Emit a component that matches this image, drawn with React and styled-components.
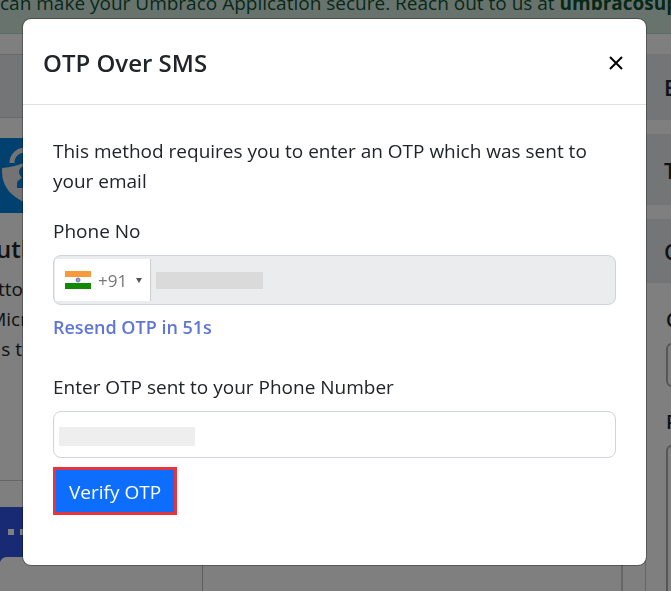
import React, { useState } from 'react';
import styled, { createGlobalStyle } from 'styled-components';

const GlobalStyle = createGlobalStyle`
  * {
    box-sizing: border-box;
  }

  body {
    margin: 0;
    background-color: #ffffff;
    color: #212529;
    font-family: 'Open Sans', 'Noto Sans', sans-serif;
    font-size: 19px;
    line-height: 30px;
  }
`;

const Page = styled.div`
  display: flex;
  flex-direction: column;
  height: 100vh;
  overflow: hidden;
`;

const Banner = styled.div`
  flex: none;
  height: 34px;
  background-color: #d1e7dd;
  border-bottom: 1px solid #badbcc;
  color: #0f5132;
  line-height: 6px;
  white-space: nowrap;
  overflow: hidden;
`;

const Columns = styled.div`
  flex: 1;
  display: flex;
  gap: 22px;
  padding-top: 20px;
`;

const Main = styled.main`
  flex: 1;
  display: flex;
  flex-direction: column;
  border-right: 2px solid #cccccc;
`;

const MainHeading = styled.div`
  height: 64px;
  background-color: #e7eaee;
  border: solid #cfd2d6;
  border-width: 1px 0;
`;

const Card = styled.section`
  height: 363px;
  padding-top: 20px;
  border-bottom: 1px solid #cccccc;
`;

const CardLogo = styled.svg`
  display: block;
  width: 76px;
  height: 75px;
`;

// right aligned, so a longer line runs out past the left edge
const CardLine = styled.p`
  display: flex;
  justify-content: flex-end;
  width: ${({ $width }) => $width};
  margin: 0;
  white-space: nowrap;
`;

const CardTitle = styled(CardLine)`
  margin: 21px 0 10px;
  font-size: 24px;
  font-weight: 600;
`;

const NextCard = styled.section`
  flex: 1;
  width: 203px;
  padding-top: 26px;
  border-right: 1px solid #bbbbbb;
`;

const Sidebar = styled.aside`
  flex: none;
  width: 26px;
  border-left: 1px solid #cccccc;
  overflow: hidden;
`;

const SidebarItem = styled.div`
  display: flex;
  align-items: center;
  height: ${({ $height }) => $height};
  margin-bottom: 14px;
  padding-left: 18px;
  background-color: #e7eaee;
  font-size: 22px;
  font-weight: 600;
`;

const SidebarForm = styled.div`
  padding: 8px 0 0 20px;
`;

const SidebarLabel = styled.label`
  display: block;
  margin-bottom: 8px;
  font-weight: 600;
`;

const SidebarInput = styled.input`
  display: block;
  width: 200px;
  height: 44px;
  margin-bottom: 20px;
  border: 2px solid #aaaaaa;
  border-radius: 6px;
`;

const SidebarTextarea = styled.textarea`
  display: block;
  width: 200px;
  height: 180px;
  border: 2px solid #aaaaaa;
  border-radius: 6px;
`;

const Backdrop = styled.div`
  position: fixed;
  inset: 0;
  display: flex;
  align-items: flex-start;
  padding: 18px 24px 24px 22px;
  background-color: rgba(0, 0, 0, 0.5);
`;

const Dialog = styled.div`
  flex: 1;
  background-color: #ffffff;
  background-clip: padding-box;
  border: 1px solid rgba(0, 0, 0, 0.3);
  border-radius: 9px;
`;

const DialogHeader = styled.header`
  display: flex;
  align-items: center;
  justify-content: space-between;
  height: 86px;
  padding: 3px 20px 0;
  border-bottom: 1px solid #dee2e6;
`;

const Title = styled.h1`
  margin: 0;
  font-size: 24px;
  font-weight: 600;
`;

const CloseButton = styled.button`
  display: flex;
  padding: 3px;
  border: none;
  background: none;
  cursor: pointer;
`;

const DialogBody = styled.form`
  padding: 31px 30px 50px;
`;

const Message = styled.p`
  margin: 0 0 20px;
`;

const Label = styled.label`
  display: block;
  margin-bottom: 9px;
`;

const Field = styled.div`
  display: flex;
  align-items: center;
  height: ${({ $disabled }) => ($disabled ? '50px' : '47px')};
  padding: ${({ $disabled }) => ($disabled ? '3px 1px' : '3px 5px 0')};
  border: 1px solid #ced4da;
  border-radius: 8px;
  background-color: ${({ $disabled }) => ($disabled ? '#eaecee' : '#ffffff')};
`;

const Country = styled.div`
  display: flex;
  align-items: center;
  gap: 7px;
  height: 42px;
  margin-right: 5px;
  padding: 0 8px 0 10px;
  border-right: 1px solid #cccccc;
  background-color: #ffffff;
`;

const DialCode = styled.select`
  appearance: none;
  width: 31px;
  padding: 0;
  border: none;
  background: none;
  color: #777777;
  font-family: inherit;
  font-size: 17px;
`;

const Masked = styled.span`
  width: ${({ $width }) => $width};
  height: ${({ $height }) => $height};
  background-color: ${({ $color }) => $color};
`;

const Input = styled.input`
  flex: 1;
  min-width: 0;
  border: none;
  outline: none;
  background: none;
  font: inherit;
`;

const Resend = styled.p`
  margin: 7px 0 30px;
  color: #5f76d9;
  font-size: 18px;
  font-weight: 600;
`;

const VerifyButton = styled.button`
  display: block;
  height: 48px;
  margin-top: 9px;
  padding: 2px 13px 0;
  border: 3px solid #e6353f;
  background-color: #0d6efd;
  color: #ffffff;
  font-family: inherit;
  font-size: 19px;
  cursor: pointer;
`;

const IndiaFlag = () => (
  <svg width="26" height="18" viewBox="0 0 26 18" aria-hidden="true">
    <rect width="26" height="18" fill="#fff" />
    <rect width="26" height="6" fill="#f79a3c" />
    <rect y="12" width="26" height="6" fill="#128807" />
    <circle cx="13" cy="9" r="2" fill="#9a9ac8" stroke="#7777aa" />
  </svg>
);

const ShieldLogo = () => (
  <CardLogo viewBox="0 0 76 75" aria-hidden="true">
    <rect width="76" height="75" fill="#0082e0" />
    <path d="M12 25c0-8 6-13 14-13s14 5 14 13" fill="none" stroke="#e6e6e6" strokeWidth="5" />
    <path d="M2 30q13-1 24-6q11 5 24 6v4c0 15-10 25-24 31C12 59 2 49 2 34z" fill="#e6e6e6" />
    <circle cx="25" cy="34" r="6" fill="#0082e0" />
    <path d="M22 38c0 4-5 3-5 8v4h17v-4c0-5-5-4-5-8z" fill="#0082e0" />
  </CardLogo>
);

const SmsLogo = () => (
  <svg width="76" height="84" viewBox="0 0 76 84" aria-hidden="true">
    <rect width="76" height="84" fill="#3054e8" />
    <path d="M8 22h6v6H8zM20 22h6v6h-6zM32 22h6v6h-6z" fill="#ffffff" />
    <path d="M0 84V55q2-5 7-5h62q5 0 7 5v29z" fill="#ffffff" />
  </svg>
);

const App = () => {
  const [otp, setOtp] = useState('');

  return (
    <>
      <GlobalStyle />
      <Page>
        <Banner>
          can make your Umbraco Application secure. Reach out to us at <b>umbracosup</b>
        </Banner>
        <Columns>
          <Main>
            <MainHeading />
            <Card>
              <ShieldLogo />
              <CardTitle $width="36px">uth</CardTitle>
              <CardLine $width="23px">tto</CardLine>
              <CardLine $width="28px">Micr</CardLine>
              <CardLine $width="22px">s t</CardLine>
            </Card>
            <NextCard>
              <SmsLogo />
            </NextCard>
          </Main>
          <Sidebar>
            <SidebarItem $height="66px">E</SidebarItem>
            <SidebarItem $height="71px">T</SidebarItem>
            <SidebarItem $height="64px">C</SidebarItem>
            <SidebarForm>
              <SidebarLabel htmlFor="side-input">C</SidebarLabel>
              <SidebarInput id="side-input" />
              <SidebarLabel htmlFor="side-text">P</SidebarLabel>
              <SidebarTextarea id="side-text" />
            </SidebarForm>
          </Sidebar>
        </Columns>
      </Page>

      <Backdrop>
        <Dialog role="dialog" aria-modal="true" aria-labelledby="otp-title">
          <DialogHeader>
            <Title id="otp-title">OTP Over SMS</Title>
            <CloseButton type="button" aria-label="Close">
              <svg width="14" height="14" viewBox="0 0 14 14" aria-hidden="true">
                <path d="M1 1l12 12M13 1L1 13" stroke="#000" strokeWidth="2" />
              </svg>
            </CloseButton>
          </DialogHeader>
          <DialogBody onSubmit={(e) => e.preventDefault()}>
            <Message>
              This method requires you to enter an OTP which was sent to your email
            </Message>
            <Label htmlFor="phone">Phone No</Label>
            <Field $disabled>
              <Country>
                <IndiaFlag />
                <DialCode aria-label="Country code" defaultValue="+91">
                  <option>+91</option>
                </DialCode>
                <svg width="6" height="5" viewBox="0 0 6 5" aria-hidden="true">
                  <path d="M0 0h6L3 5z" fill="#555" />
                </svg>
              </Country>
              <Masked $width="107px" $height="17px" $color="#dadada" />
              <Input id="phone" type="tel" disabled />
            </Field>
            <Resend>Resend OTP in 51s</Resend>
            <Label htmlFor="otp">Enter OTP sent to your Phone Number</Label>
            <Field>
              <Masked $width="136px" $height="19px" $color="#eeeeee" />
              <Input id="otp" value={otp} onChange={(e) => setOtp(e.target.value)} />
            </Field>
            <VerifyButton type="submit">Verify OTP</VerifyButton>
          </DialogBody>
        </Dialog>
      </Backdrop>
    </>
  );
};

export default App;
